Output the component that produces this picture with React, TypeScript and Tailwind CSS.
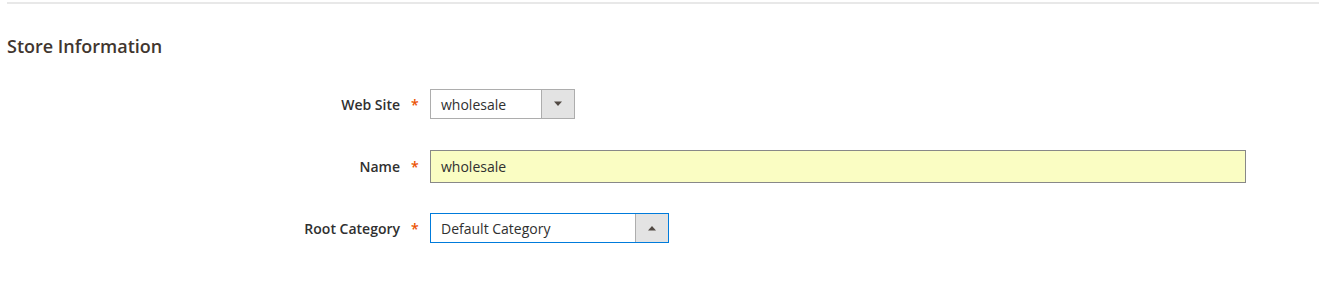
import React from 'react';

const Caret = ({ up }: { up?: boolean }) => (
  <svg width="10" height="6" viewBox="0 0 10 6" className="block">
    {up ? <path d="M1 5.5 L5 1 L9 5.5 Z" fill="#514943" /> : <path d="M1 0.5 L5 5 L9 0.5 Z" fill="#514943" />}
  </svg>
);

const Field = ({ label, children }: { label: string; children: React.ReactNode }) => (
  <div className="flex items-center">
    <div className="w-[430px] flex items-center justify-end pr-[13px]">
      <span className="text-[14px] font-semibold text-[#303030]">{label}</span>
      <span className="ml-[11px] w-[6px] text-[14px] font-semibold text-[#eb5202]">*</span>
    </div>
    {children}
  </div>
);

const App: React.FC = () => {
  return (
    <div className="w-[1319px] h-[299px] bg-white" style={{ fontFamily: '"Open Sans", "Liberation Sans", sans-serif' }}>
      <div className="pl-[7px] pt-[2px]">
        <div className="h-[2px] bg-[#e8e8e8]" />
      </div>

      <h2 className="pl-[7px] mt-[30px] text-[18px] leading-[24px] font-semibold text-[#41362f]">Store Information</h2>

      <div className="mt-[31px] flex flex-col">
        <Field label="Web Site">
          <div className="flex h-[30px] w-[145px] border border-[#adadad] bg-white">
            <div className="flex-1 flex items-center pl-[10px] text-[14px] text-[#303030]">wholesale</div>
            <div className="w-[33px] flex items-center justify-center bg-[#e3e3e3] border-l border-[#adadad]">
              <Caret />
            </div>
          </div>
        </Field>

        <div className="mt-[31px]">
          <Field label="Name">
            <div className="h-[33px] w-[816px] border border-[#888888] bg-[#fafdc3] flex items-center pl-[10px] text-[14px] text-[#303030]">wholesale</div>
          </Field>
        </div>

        <div className="mt-[30px]">
          <Field label="Root Category">
            <div className="flex h-[30px] w-[239px] border border-[#007bdb] bg-white">
              <div className="flex-1 flex items-center pl-[10px] text-[14px] text-[#303030]">Default Category</div>
              <div className="w-[33px] flex items-center justify-center bg-[#e3e3e3] border-l border-[#adadad]">
                <Caret up />
              </div>
            </div>
          </Field>
        </div>
      </div>
    </div>
  );
};

export default App;
